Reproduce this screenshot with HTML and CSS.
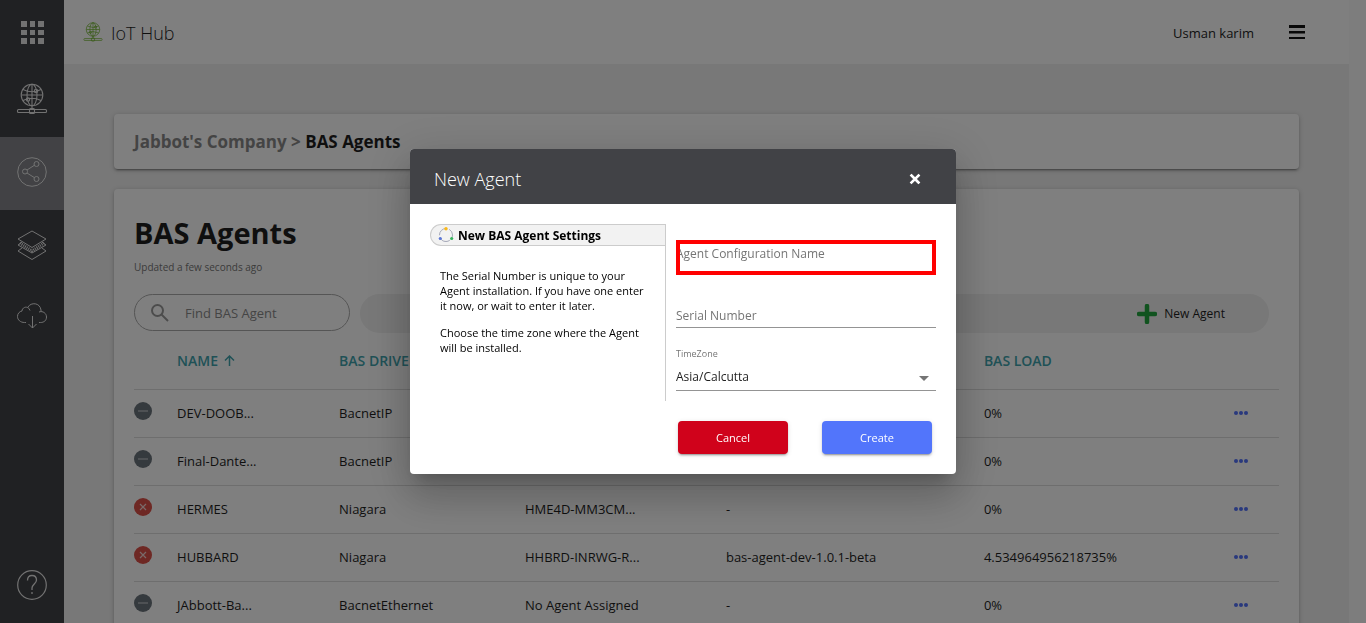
FILE: index.html
```html
<!DOCTYPE html>
<html lang="en">
<head>
<meta charset="utf-8">
<meta name="viewport" content="width=device-width, initial-scale=1">
<title>IoT Hub - BAS Agents</title>
<link rel="stylesheet" href="styles.css">
</head>
<body>
<svg class="sprite" aria-hidden="true">
  <symbol id="globe" viewBox="0 0 32 32">
    <g fill="none" stroke="currentColor" stroke-width="1.1">
      <circle cx="16" cy="12" r="10.8"/>
      <ellipse cx="16" cy="12" rx="5" ry="10.8"/>
      <path d="M16 1v25M5.3 12h21.4M7 6.500Q16 11 25 6.500M7 17.500Q16 13 25 17.500"/>
      <circle cx="20" cy="8" r="1.700"/><circle cx="12" cy="16.500" r="1.700"/>
      <rect x="1.500" y="26.500" width="29" height="3" rx="1"/>
      <rect x="13.500" y="25.500" width="5" height="5" rx="1"/>
    </g>
  </symbol>
  <symbol id="offline" viewBox="0 0 18 18"><circle cx="9" cy="9" r="9" fill="#6b747c"/><path d="M4 9h10" stroke="#aeb3b7" stroke-width="1.500"/></symbol>
  <symbol id="failed" viewBox="0 0 18 18"><circle cx="9" cy="9" r="9" fill="#dd5148"/><path d="M6 6l6 6M12 6l-6 6" stroke="#f2d5d3" stroke-width="1.200"/></symbol>
  <symbol id="dots" viewBox="0 0 14 4"><g fill="#5272fb"><circle cx="2" cy="2" r="2"/><circle cx="7" cy="2" r="2"/><circle cx="12" cy="2" r="2"/></g></symbol>
</svg>

<div class="app">
  <nav class="sidebar" aria-label="Main">
    <a class="side-link side-link--apps" href="#" aria-label="Apps">
      <svg width="23" height="23" viewBox="0 0 23 23" fill="currentColor"><path d="M0 0h6v6H0zM9 0h5v6H9zM17 0h6v6h-6zM0 9h6v5H0zM9 9h5v5H9zM17 9h6v5h-6zM0 17h6v6H0zM9 17h5v6H9zM17 17h6v6h-6z"/></svg>
    </a>
    <a class="side-link" href="#" aria-label="IoT Hub"><svg width="32" height="32"><use href="#globe"/></svg></a>
    <a class="side-link side-link--active" href="#" aria-label="Agents">
      <svg width="30" height="30" viewBox="0 0 30 30" fill="none" stroke="currentColor"><circle cx="15" cy="15" r="14.300"/><circle cx="8" cy="14.500" r="2.500"/><circle cx="19.500" cy="7" r="2.500"/><circle cx="19.500" cy="22" r="2.500"/><path d="M10 13l7.500-4.800M10 16l7.500 4.700"/></svg>
    </a>
    <a class="side-link" href="#" aria-label="Layers">
      <svg width="30" height="30" viewBox="0 0 30 30" fill="none" stroke="currentColor"><path d="M15 1l14 8-14 8.500L1 9z"/><path d="M5 12l-4 3 14 8 14-8-4-3"/><path d="M5 18l-4 3 14 8.500L29 21l-4-3"/><path d="M3 13l12 8 12-8" stroke-width="3" stroke-dasharray="1 1"/></svg>
    </a>
    <a class="side-link side-link--cloud" href="#" aria-label="Downloads">
      <svg width="30" height="26" viewBox="0 0 30 26" fill="none" stroke="currentColor"><path d="M9 19.500H7.500C3.500 19.500 .5 17 .5 13.500c0-3 2-5 4.500-5.500 0-3 4-5.500 7-2.500l1 2M11 4c3-5 12-4.500 13 3v2M22 9c4-1.500 7.500 1.500 7.500 5s-2.500 5.500-6 5.500H22M15.500 13v12M11.500 21l4 4 4-4"/></svg>
    </a>
    <a class="side-link side-link--help" href="#" aria-label="Help">
      <svg width="30" height="30" viewBox="0 0 30 30" fill="none" stroke="currentColor"><circle cx="15" cy="15" r="14.300" stroke-width="1.200"/><path d="M10.500 10.500C10.500 7 12.500 5.500 15 5.500s4.500 1.700 4.500 4.500c0 3.500-4.500 4.500-4.500 8v2M15 22v2" stroke-width="1.300"/></svg>
    </a>
  </nav>

  <div class="page">
    <header class="topbar">
      <svg class="brand-icon" width="20" height="20"><use href="#globe"/></svg>
      <span class="brand">IoT Hub</span>
      <span class="user">Usman karim</span>
      <button class="menu" aria-label="Menu"><svg width="16" height="14" viewBox="0 0 16 14"><path d="M0 0h16v3H0zM0 6h16v2.500H0zM0 12h16v2H0z" fill="#111"/></svg></button>
    </header>

    <main class="content">
      <nav class="card crumbs" aria-label="Breadcrumb"><a href="#">Jabbot's Company</a> &gt; <span class="crumb-current">BAS Agents</span></nav>

      <section class="card agents">
        <h1 class="title">BAS Agents</h1>
        <p class="updated">Updated a few seconds ago</p>
        <div class="toolbar">
          <label class="search">
            <svg width="18" height="18" viewBox="0 0 18 18" fill="none" stroke="#999" stroke-width="2"><circle cx="6.500" cy="6.500" r="5.500"/><path d="M10.500 10.500l6.500 6.500"/></svg>
            <input type="search" placeholder="Find BAS Agent" aria-label="Find BAS Agent">
          </label>
          <div class="actions">
            <button class="add">
              <svg width="20" height="20" viewBox="0 0 20 20"><path d="M10 2v16M2 10h16" stroke="#22a63f" stroke-width="4.500" stroke-linecap="round"/></svg>New Agent
            </button>
          </div>
        </div>

        <table class="table">
          <colgroup><col class="col-status"><col class="col-name"><col class="col-driver"><col class="col-serial"><col class="col-version"><col class="col-load"><col class="col-menu"></colgroup>
          <thead>
            <tr><th></th><th>NAME <svg class="sort" width="11" height="11" viewBox="0 0 11 11" fill="none" stroke="currentColor" stroke-width="1.500"><path d="M5.500 11V1M1 5.500L5.500 1 10 5.500"/></svg></th><th>BAS DRIVER</th><th></th><th></th><th>BAS LOAD</th><th></th></tr>
          </thead>
          <tbody>
            <tr><td><svg class="status"><use href="#offline"/></svg></td><td>DEV-DOOB...</td><td>BacnetIP</td><td></td><td></td><td>0%</td><td><button class="more" aria-label="Actions"><svg><use href="#dots"/></svg></button></td></tr>
            <tr><td><svg class="status"><use href="#offline"/></svg></td><td>Final-Dante...</td><td>BacnetIP</td><td></td><td></td><td>0%</td><td><button class="more" aria-label="Actions"><svg><use href="#dots"/></svg></button></td></tr>
            <tr><td><svg class="status"><use href="#failed"/></svg></td><td>HERMES</td><td>Niagara</td><td>HME4D-MM3CM...</td><td>-</td><td>0%</td><td><button class="more" aria-label="Actions"><svg><use href="#dots"/></svg></button></td></tr>
            <tr><td><svg class="status"><use href="#failed"/></svg></td><td>HUBBARD</td><td>Niagara</td><td>HHBRD-INRWG-R...</td><td>bas-agent-dev-1.0.1-beta</td><td>4.534964956218735%</td><td><button class="more" aria-label="Actions"><svg><use href="#dots"/></svg></button></td></tr>
            <tr><td><svg class="status"><use href="#offline"/></svg></td><td>JAbbott-Ba...</td><td>BacnetEthernet</td><td>No Agent Assigned</td><td>-</td><td>0%</td><td><button class="more" aria-label="Actions"><svg><use href="#dots"/></svg></button></td></tr>
          </tbody>
        </table>
      </section>
    </main>
  </div>
  <div class="gutter"></div>
</div>

<div class="overlay">
  <form class="dialog" role="dialog" aria-modal="true" aria-labelledby="dialog-title">
    <header class="dialog-head">
      <h2 class="dialog-title" id="dialog-title">New Agent</h2>
      <button class="close" type="button" aria-label="Close"><svg width="12" height="12" viewBox="0 0 12 12"><path d="M2.500 2.500l7 7M9.500 2.500l-7 7" stroke="#fff" stroke-width="2.600" stroke-linecap="square"/></svg></button>
    </header>
    <div class="dialog-body">
      <section class="info">
        <h3 class="info-tab">
          <svg width="16" height="16" viewBox="0 0 16 16" fill="none"><circle cx="8" cy="8" r="6.500" stroke="#a5a8b8" stroke-dasharray="11.600 2" stroke-dashoffset="-6"/><circle cx="8" cy="1.800" r="1.700" fill="#fbb917"/><circle cx="2.300" cy="11.500" r="1.600" fill="#5b76d6"/><circle cx="13.700" cy="11.500" r="1.600" fill="#35b45d"/></svg>New BAS Agent Settings
        </h3>
        <div class="info-text">
          <p>The Serial Number is unique to your Agent installation. If you have one enter it now, or wait to enter it later.</p>
          <p>Choose the time zone where the Agent will be installed.</p>
        </div>
      </section>
      <div class="fields">
        <div class="field field--marked"><input class="control" type="text" placeholder="Agent Configuration Name" aria-label="Agent Configuration Name"></div>
        <div class="field"><input class="control" type="text" placeholder="Serial Number" aria-label="Serial Number"></div>
        <div class="field field--select">
          <label class="field-label" for="zone">TimeZone</label>
          <select class="control" id="zone"><option>Asia/Calcutta</option></select>
        </div>
      </div>
    </div>
    <footer class="dialog-foot">
      <button class="btn btn--cancel" type="button">Cancel</button>
      <button class="btn btn--create" type="submit">Create</button>
    </footer>
  </form>
</div>
</body>
</html>
```

FILE: styles.css
```css
* { box-sizing: border-box; }

body {
  margin: 0;
  overflow: hidden;
  font-family: "Open Sans", "Noto Sans", sans-serif;
  font-size: 13px;
  color: #1e1e1e;
}

button, input, select { font: inherit; }
button { border: 0; padding: 0; background: none; color: inherit; cursor: pointer; }
svg { display: block; flex: none; }
h1, h2, h3, p { margin: 0; }
.sprite { position: absolute; width: 0; height: 0; }

.app { display: flex; height: 100vh; overflow: hidden; background: #f0f0f0; }
.gutter { flex: none; width: 17px; background: #fafafa; }

.sidebar {
  flex: none;
  display: flex;
  flex-direction: column;
  width: 64px;
  background: #404246;
  color: #e4e4e4;
}
.side-link {
  display: flex;
  align-items: center;
  justify-content: center;
  height: 73px;
  padding-bottom: 3px;
  color: inherit;
}
.side-link--apps { height: 64px; padding-bottom: 0; }
.side-link--active { background: #84858b; }
.side-link--cloud { height: 68px; }
.side-link--help { margin-top: auto; height: 76px; padding-bottom: 0; }

.page { flex: 1; min-width: 0; }
.topbar {
  display: flex;
  align-items: center;
  height: 64px;
  padding: 0 44px 0 19px;
  background: #fff;
}
.brand-icon { color: #6fb52c; }
.brand { flex: 1; margin: 2px 0 0 8px; font-size: 18px; font-weight: 300; }
.user { margin: 2px 35px 0 0; }

.content { display: flex; flex-direction: column; gap: 20px; padding: 50px; }
.card {
  border-radius: 4px;
  padding: 0 20px;
  background: #fff;
  box-shadow: 0 3px 1px -2px rgba(0, 0, 0, .2), 0 2px 2px rgba(0, 0, 0, .14), 0 1px 5px rgba(0, 0, 0, .2);
}
.crumbs { line-height: 55px; font-size: 17px; font-weight: 700; color: #888; }
.crumbs a { color: inherit; text-decoration: none; }
.crumb-current { color: #1e1e1e; }

.agents { padding-bottom: 20px; }
.title { padding-top: 24px; font-size: 29px; line-height: 40px; }
.updated { padding-top: 6px; font-size: 10px; line-height: 16px; color: #777; }
.toolbar { display: flex; gap: 10px; padding: 19px 10px 0 0; }
.search {
  display: flex;
  align-items: center;
  gap: 16px;
  width: 216px;
  height: 37px;
  padding: 0 16px;
  border: 1px solid #aaa;
  border-radius: 20px;
}
.search input { min-width: 0; flex: 1; border: 0; padding: 0; background: none; outline: 0; }
.search input::placeholder { color: #8a8a8a; opacity: 1; }
.actions {
  flex: 1;
  display: flex;
  justify-content: flex-end;
  height: 39px;
  padding-right: 44px;
  border-radius: 20px;
  background: #f0f0f0;
}
.add { display: flex; align-items: center; gap: 7px; font-size: 12px; }

.table { width: 100%; border-collapse: collapse; table-layout: fixed; }
.col-status { width: 3.76%; }
.col-name { width: 14.15%; }
.col-driver { width: 16.24%; }
.col-serial { width: 17.55%; }
.col-version { width: 22.53%; }
.col-load { width: 21.85%; }
.col-menu { width: 3.92%; }
.table th {
  height: 56px;
  padding: 0;
  border-bottom: 1px solid #dcdcdc;
  text-align: left;
  font-size: 14px;
  font-weight: 600;
  color: #40a3ad;
}
.sort { display: inline-block; margin-left: 2px; }
.table td { height: 48px; padding: 0; border-bottom: 1px solid #dcdcdc; white-space: nowrap; }
.status { width: 18px; height: 18px; margin-bottom: 4px; }
.more { display: block; }
.more svg { width: 14px; height: 4px; }

.overlay {
  position: fixed;
  inset: 0;
  display: flex;
  align-items: center;
  justify-content: center;
  background: rgba(0, 0, 0, .5);
}
.dialog {
  width: 546px;
  border-radius: 4px;
  overflow: hidden;
  background: #fff;
  color: #000;
  box-shadow: 0 11px 15px -7px rgba(0, 0, 0, .2), 0 24px 38px 3px rgba(0, 0, 0, .14), 0 9px 46px 8px rgba(0, 0, 0, .12);
}
.dialog-head {
  display: flex;
  align-items: center;
  justify-content: space-between;
  height: 55px;
  padding: 4px 35px 0 24px;
  background: #414246;
  color: #fff;
}
.dialog-title { font-size: 18px; font-weight: 300; }
.dialog-body { display: flex; gap: 10px; padding: 20px 20px 0; }
.info { width: 236px; height: 177px; border-right: 1px solid #ccc; }
.info-tab {
  display: flex;
  align-items: center;
  gap: 4px;
  height: 22px;
  padding-left: 7px;
  border: 1px solid #ccc;
  border-right: 0;
  border-radius: 11px 0 0 11px;
  background: #f2f2f2;
  font-size: 12px;
}
.info-text {
  display: grid;
  gap: 12px;
  padding: 22px 14px 0 10px;
  font-size: 11px;
  line-height: 15px;
}

.fields { flex: 1; padding-top: 16px; }
.field { position: relative; font-size: 12px; }
.field + .field { margin-top: 28px; }
.field--marked::after {
  content: "";
  position: absolute;
  inset: 0;
  border: 4px solid #f00;
}
.field--marked .control { height: 35px; padding-bottom: 7px; }
.control {
  display: block;
  width: 100%;
  height: 25px;
  padding: 0;
  border: 0;
  border-bottom: 1px solid #949494;
  border-radius: 0;
  outline: 0;
  background: none;
  color: #1e1e1e;
  appearance: none;
}
.control::placeholder { color: #757575; opacity: 1; }
.field--select.field { margin-top: 18px; }
.field--select::after {
  content: "";
  position: absolute;
  right: 7px;
  bottom: 10px;
  border: 5px solid transparent;
  border-top-color: #757575;
  border-bottom: 0;
}
.field-label { display: block; font-size: 9px; line-height: 16px; color: #757575; }
.field--select .control { height: 29px; }

.dialog-foot { display: flex; justify-content: flex-end; gap: 34px; padding: 20px 24px; }
.btn {
  width: 110px;
  height: 33px;
  border-radius: 4px;
  color: #fff;
  font-size: 11px;
  box-shadow: 0 3px 1px -2px rgba(0, 0, 0, .2), 0 2px 2px rgba(0, 0, 0, .14), 0 1px 5px rgba(0, 0, 0, .12);
}
.btn--cancel { background: #d0021b; }
.btn--create { background: #5275fb; }
```
